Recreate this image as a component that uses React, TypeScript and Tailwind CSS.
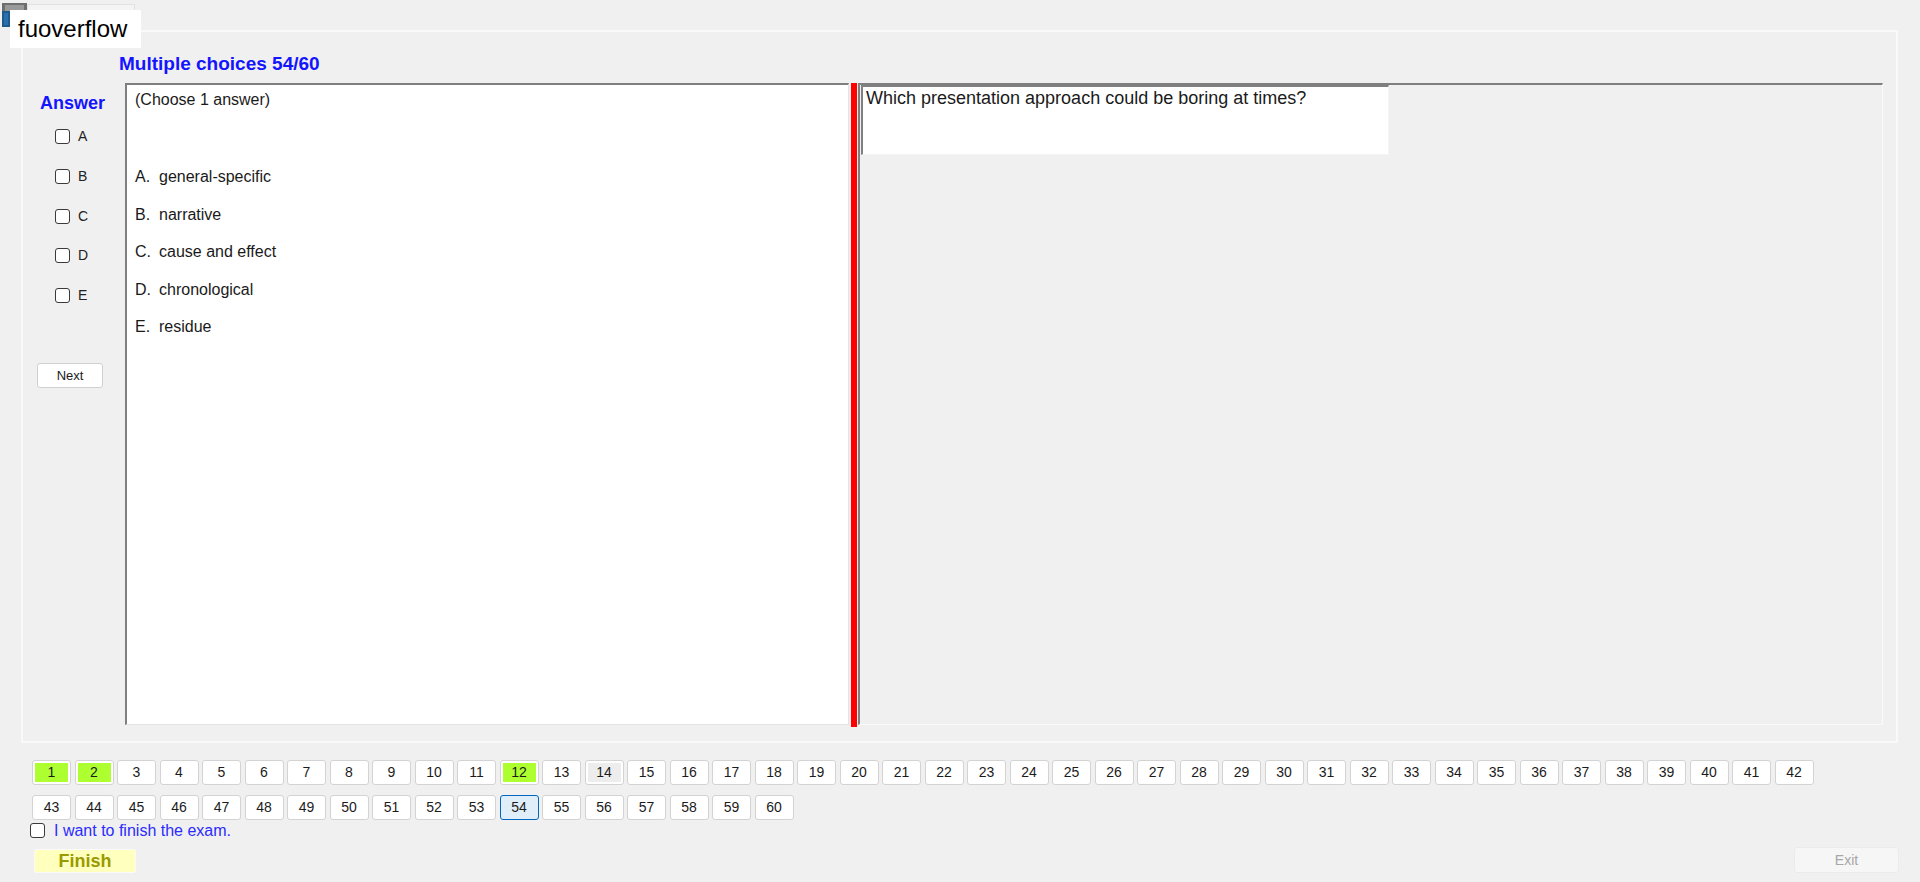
import React from "react";

const F = { fontFamily: '"Liberation Sans", Arial, sans-serif' };

function QBtn({ n }: { n: number }) {
  const green = n === 1 || n === 2 || n === 12;
  const gray = n === 14;
  const cur = n === 54;
  if (cur) {
    return (
      <div className="w-[39px] h-[25px] shrink-0 rounded-[3px] border border-[#0067c0] bg-[#e0eef9] flex items-center justify-center text-[14px] text-[#1b1b1b]">
        {n}
      </div>
    );
  }
  return (
    <div className="w-[39px] h-[25px] shrink-0 rounded-[3px] border border-[#d3d3d3] bg-white p-[2px]">
      <div
        className={
          "w-full h-full flex items-center justify-center text-[14px] text-[#1b1b1b] " +
          (green ? "bg-[#adff2f]" : gray ? "bg-[#ededed]" : "bg-white")
        }
      >
        {n}
      </div>
    </div>
  );
}

function Box({ className = "" }: { className?: string }) {
  return (
    <div
      className={
        "w-[15px] h-[15px] rounded-[3px] border-[1.5px] border-[#3a3a3a] bg-white shrink-0 " + className
      }
    />
  );
}

export default function App() {
  const row1 = Array.from({ length: 42 }, (_, i) => i + 1);
  const row2 = Array.from({ length: 18 }, (_, i) => i + 43);
  const letters = ["A", "B", "C", "D", "E"];
  const options = ["general-specific", "narrative", "cause and effect", "chronological", "residue"];

  return (
    <div className="relative w-[1920px] h-[882px] bg-[#f0f0f0] overflow-hidden" style={F}>
      {/* top-left overlay: icon, tab outline, label */}
      <div className="absolute left-[27px] top-[4px] w-[108px] h-[26px] border border-[#e2e2e2] bg-[#f4f4f4]" />
      <svg className="absolute left-[2px] top-[3px]" width="25" height="24" viewBox="0 0 25 24">
        <rect x="0" y="0" width="25" height="24" fill="#6f6f6f" />
        <rect x="3" y="2" width="19" height="7" fill="#9a9a9a" />
        <rect x="0" y="8" width="8" height="16" fill="#1f5a8c" />
        <rect x="2" y="10" width="4" height="12" fill="#2a6fae" />
      </svg>
      <div className="absolute left-[10px] top-[10px] w-[131px] h-[38px] bg-white flex items-center pl-[8px] text-[24px] text-black leading-none">
        fuoverflow
      </div>

      {/* group box */}
      <div className="ml-[21px] mt-[30px] w-[1877px] h-[713px] border-2 border-[#f9f9f9] flex flex-col">
        <div className="ml-[96px] mt-[21px] text-[19px] leading-[22px] font-bold text-[#1414ff]">
          Multiple choices 54/60
        </div>
        <div className="mt-[8px] flex h-[644px]">
          {/* answer column */}
          <div className="w-[102px] shrink-0 flex flex-col">
            <div className="pl-[17px] pt-[10px] text-[18px] leading-[20px] font-bold text-[#1414ff]">Answer</div>
            <div className="mt-[16px] flex flex-col">
              {letters.map((l) => (
                <div key={l} className="h-[39.75px] flex items-start pl-[32px] gap-[8px]">
                  <Box />
                  <span className="text-[14px] leading-[15px] text-[#222]">{l}</span>
                </div>
              ))}
            </div>
            <div className="ml-[14px] mt-[35px] w-[66px] h-[25px] rounded-[3px] border border-[#d0d0d0] bg-white flex items-center justify-center text-[13px] text-[#1b1b1b]">
              Next
            </div>
          </div>

          {/* white answer panel */}
          <div className="w-[724px] h-[642px] shrink-0 bg-white border-l-2 border-t-2 border-[#7f7f7f] border-r border-b border-r-[#e3e3e3] border-b-[#e3e3e3] pl-[8px] pt-[6px] text-[16px] leading-[18px] text-[#1a1a1a]">
            <div>(Choose 1 answer)</div>
            <div className="mt-[59px] flex flex-col">
              {options.map((o, i) => (
                <div key={o} className="h-[37.5px] flex">
                  <span className="w-[24px]">{letters[i]}.</span>
                  <span>{o}</span>
                </div>
              ))}
            </div>
          </div>

          <div className="w-[2px] shrink-0" />
          <div className="w-[6px] h-[644px] shrink-0 bg-[#ff0000]" />
          <div className="w-[1px] shrink-0" />

          {/* right question panel */}
          <div className="w-[1025px] h-[642px] shrink-0 bg-[#f0f0f0] border-l-2 border-t-2 border-[#7f7f7f] border-r border-b border-r-[#fafafa] border-b-[#fafafa]">
            <div className="ml-[1px] w-[528px] h-[70px] bg-white border-l-2 border-t-2 border-[#808080] border-r border-b border-r-[#f4f4f4] border-b-[#f4f4f4] pl-[3px] pt-[1px] text-[18px] leading-[21px] text-[#1a1a1a]">
              Which presentation approach could be boring at times?
            </div>
          </div>
        </div>
      </div>

      {/* question navigation */}
      <div className="ml-[32px] mt-[17px] flex gap-[3.5px]">
        {row1.map((n) => (
          <QBtn key={n} n={n} />
        ))}
      </div>
      <div className="ml-[32px] mt-[10px] flex gap-[3.5px]">
        {row2.map((n) => (
          <QBtn key={n} n={n} />
        ))}
      </div>
      <div className="ml-[30px] mt-[3px] flex items-center gap-[9px] h-[15px]">
        <Box />
        <span className="text-[16px] leading-[17px] text-[#2b2bff]">I want to finish the exam.</span>
      </div>
      <div className="mt-[9px] flex items-start justify-between pl-[34px] pr-[21px]">
        <div className="mt-[2px] w-[102px] h-[24px] bg-[#ffffbe] border border-[#fafafa] rounded-[2px] flex items-center justify-center text-[18px] font-bold text-[#9a9a00]">
          Finish
        </div>
        <div className="w-[105px] h-[26px] bg-[#f6f6f6] border border-[#ebebeb] rounded-[3px] flex items-center justify-center text-[14px] text-[#a6a6a6]">
          Exit
        </div>
      </div>
    </div>
  );
}
